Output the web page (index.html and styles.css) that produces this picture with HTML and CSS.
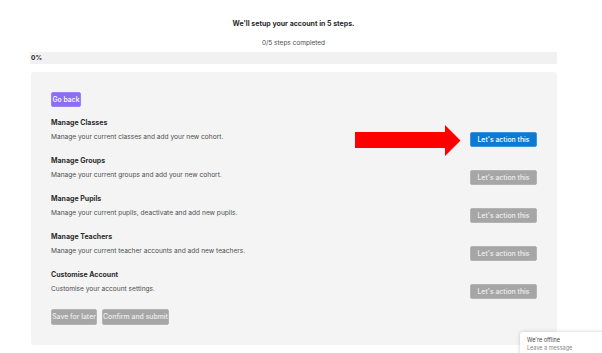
FILE: index.html
```html
<!DOCTYPE html>
<html lang="en">
<head>
  <meta charset="UTF-8" />
  <meta name="viewport" content="width=device-width, initial-scale=1.0"/>
  <title>Account setup</title>
  <link rel="stylesheet" href="styles.css">
</head>
<body>
  <main class="setup">
    <h1 class="setup-title">We'll setup your account in 5 steps.</h1>
    <p class="setup-count">0/5 steps completed</p>
    <div class="progress"><span>0%</span></div>

    <section class="panel">
      <button class="btn btn-back">Go back</button>

      <div class="steps">
        <div class="step">
          <h2>Manage Classes</h2>
          <p>Manage your current classes and add your new cohort.</p>
          <button class="btn btn-action active">Let's action this</button>
        </div>
        <div class="step">
          <h2>Manage Groups</h2>
          <p>Manage your current groups and add your new cohort.</p>
          <button class="btn btn-action">Let's action this</button>
        </div>
        <div class="step">
          <h2>Manage Pupils</h2>
          <p>Manage your current pupils, deactivate and add new pupils.</p>
          <button class="btn btn-action">Let's action this</button>
        </div>
        <div class="step">
          <h2>Manage Teachers</h2>
          <p>Manage your current teacher accounts and add new teachers.</p>
          <button class="btn btn-action">Let's action this</button>
        </div>
        <div class="step">
          <h2>Customise Account</h2>
          <p>Customise your account settings.</p>
          <button class="btn btn-action">Let's action this</button>
        </div>
      </div>

      <div class="panel-actions">
        <button class="btn btn-muted btn-save">Save for later</button>
        <button class="btn btn-muted btn-confirm">Confirm and submit</button>
      </div>

      <!-- annotation arrow -->
      <svg class="arrow" width="106" height="31" viewBox="0 0 106 31">
        <polygon points="0,7 90,7 90,0 105.5,15.5 90,31 90,23 0,23" fill="#ff0000"/>
      </svg>
    </section>
  </main>

  <div class="chat-widget">
    <p class="chat-status">We're offline</p>
    <p class="chat-leave">Leave a message</p>
  </div>
</body>
</html>
```

FILE: styles.css
```css
:root {
  --texto: #333333;
  --gris-texto: #4d4d4d;
  --panel: #f4f4f4;
  --barra: #f1f1f1;
  --azul: #0b7ad6;
  --morado: #8b6ef2;
  --gris-boton: #a6a6a6;
}
* { box-sizing: border-box; margin: 0; padding: 0; }
body {
  font-family: Inter, "Noto Sans", sans-serif;
  background: #ffffff;
  color: var(--texto);
  font-size: 7px;
  width: 602px;
  height: 353px;
  overflow: hidden;
  position: relative;
}
.setup {
  width: 527px;
  margin-left: 30px;
  padding-top: 19px;
}
.setup-title {
  text-align: center;
  font-size: 7px;
  font-weight: 700;
  line-height: 10px;
  color: #2b2b2b;
}
.setup-count {
  text-align: center;
  line-height: 10px;
  margin-top: 9px;
  color: var(--gris-texto);
  font-size: 6.5px;
}
.progress {
  margin-top: 4px;
  height: 12px;
  background: var(--barra);
  display: flex;
  align-items: center;
  padding-left: 1px;
  font-size: 6.5px;
  font-weight: 700;
  color: #222;
}
.panel {
  position: relative;
  margin-top: 8px;
  margin-left: 1px;
  background: var(--panel);
  border-radius: 3px;
  padding: 20px;
  height: 273px;
}
.btn {
  font-family: inherit;
  font-size: 6.9px;
  font-weight: 500;
  border: 1px solid transparent;
  border-radius: 2px;
  color: #ffffff;
  cursor: pointer;
  height: 15px;
  line-height: 13px;
  padding: 0;
  white-space: nowrap;
  text-align: center;
}
.btn-back {
  background: var(--morado);
  border-color: #9a82f4;
  width: 30px;
  display: block;
}
.steps {
  margin-top: 11px;
  display: flex;
  flex-direction: column;
  gap: 9px;
}
.step {
  display: grid;
  grid-template-columns: 1fr 67px;
  grid-template-rows: 10px 15px;
  row-gap: 4px;
}
.step h2 {
  grid-column: 1 / -1;
  font-size: 7px;
  font-weight: 700;
  line-height: 10px;
  color: #2e2e2e;
}
.step p {
  line-height: 10px;
  color: var(--gris-texto);
  font-size: 6.6px;
}
.btn-action {
  width: 67px;
  background: var(--gris-boton);
  border-color: #b4b4b4;
  color: #eeeeee;
}
.btn-action.active {
  background: var(--azul);
  border-color: #3d95de;
  color: #ffffff;
}
.panel-actions {
  margin-top: 10px;
  display: flex;
  gap: 5px;
}
.btn-muted {
  height: 16px;
  line-height: 14px;
  background: var(--gris-boton);
  border-color: #b4b4b4;
  color: #eeeeee;
}
.btn-save { width: 46px; }
.btn-confirm { width: 67px; }
.arrow {
  position: absolute;
  left: 324px;
  top: 53px;
}
.chat-widget {
  position: absolute;
  left: 520px;
  top: 332px;
  width: 90px;
  height: 30px;
  background: #ffffff;
  border-radius: 3px 0 0 0;
  box-shadow: 0 0 4px rgba(0,0,0,0.18);
  padding: 4px 0 0 7px;
  font-size: 5.5px;
  line-height: 8px;
}
.chat-status { color: #444444; }
.chat-leave { color: #8a8a8a; }
```
